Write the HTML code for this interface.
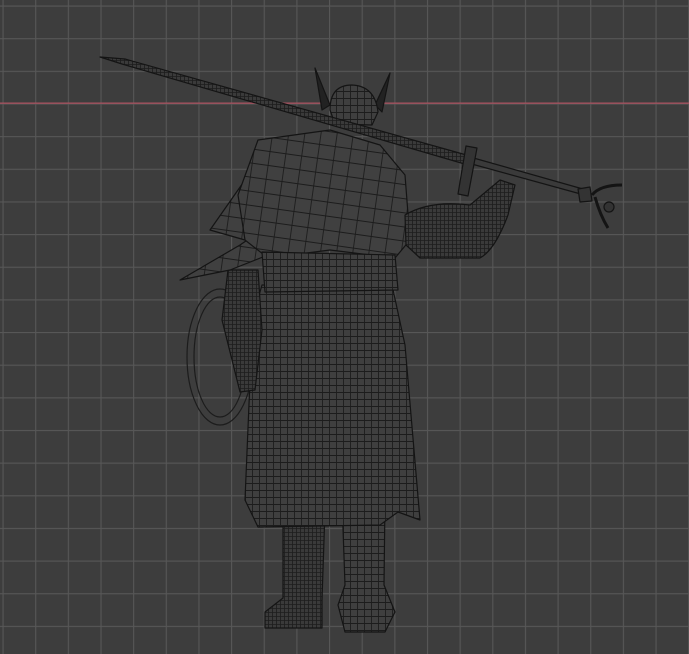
<!DOCTYPE html>
<html><head><meta charset="utf-8"><style>
html,body{margin:0;padding:0;background:#3d3d3d;width:689px;height:654px;overflow:hidden}
svg{display:block}
</style></head><body>
<svg width="689" height="654" viewBox="0 0 689 654" xmlns="http://www.w3.org/2000/svg">
<defs>
<pattern id="g" x="2.5" y="5.5" width="32.65" height="32.65" patternUnits="userSpaceOnUse">
<path d="M0.5 0V32.65M0 0.5H32.65" stroke="#575757" stroke-width="1.2" fill="none"/>
</pattern>
<pattern id="m" width="7" height="7" patternUnits="userSpaceOnUse">
<rect width="7" height="7" fill="#3f3f3f"/>
<path d="M0.5 0V7M0 0.5H7" stroke="#1c1c1c" stroke-width="0.9" fill="none"/>
</pattern>
<pattern id="mf" width="4" height="4" patternUnits="userSpaceOnUse">
<rect width="4" height="4" fill="#3a3a3a"/>
<path d="M0.5 0V4M0 0.5H4" stroke="#1c1c1c" stroke-width="0.8" fill="none"/>
</pattern>
<pattern id="mc" width="16" height="14" patternUnits="userSpaceOnUse" patternTransform="rotate(8)">
<rect width="16" height="14" fill="#404040"/>
<path d="M0.5 0V14M0 0.5H16" stroke="#1c1c1c" stroke-width="0.9" fill="none"/>
</pattern>
</defs>
<rect width="689" height="654" fill="#3d3d3d"/>
<rect width="689" height="654" fill="url(#g)"/>
<rect x="0" y="102.5" width="689" height="1.3" fill="#a8515f"/>
<g stroke="#141414" stroke-width="1.2" stroke-linejoin="round">
<ellipse cx="220" cy="357" rx="33" ry="68" fill="none" stroke="#1c1c1c" stroke-width="1.2"/>
<ellipse cx="220" cy="357" rx="26" ry="60" fill="none" stroke="#1c1c1c" stroke-width="1.2"/>
<path d="M315 68 L330 105 L322 110 Z" fill="#222"/>
<path d="M390 73 L375 105 L382 112 Z" fill="#222"/>
<path d="M330 110 Q330 85 352 85 Q375 86 378 112 L372 125 L335 124 Z" fill="url(#m)"/>
<path d="M283 510 L325 510 L322 600 L322 628 L265 628 L265 612 L283 598 Z" fill="url(#mf)"/>
<path d="M342 500 L385 500 L384 585 L395 612 L385 632 L345 632 L338 605 L345 585 Z" fill="url(#m)"/>
<path d="M262 285 L392 285 L405 345 L420 520 L398 512 L380 525 L258 527 L245 500 L250 380 L252 320 Z" fill="url(#m)"/>
<path d="M228 270 L258 270 L262 330 L255 390 L240 392 L232 360 L222 320 Z" fill="url(#mf)"/>
<path d="M180 280 L240 245 L262 230 L268 255 L230 270 Z" fill="url(#mc)"/>
<path d="M210 230 L245 180 L258 200 L245 240 Z" fill="url(#mc)"/>
<path d="M258 140 L330 130 L380 145 L405 175 L410 240 L395 258 L330 250 L268 258 L245 240 L238 195 Z" fill="url(#mc)"/>
<path d="M262 252 L395 255 L398 290 L265 292 Z" fill="url(#m)"/>
<path d="M405 215 Q430 200 470 205 L500 180 L515 185 L508 215 Q495 250 480 258 L420 258 L406 245 Z" fill="url(#mf)"/>
<path d="M100 57 L125 59 L470 156 L468 165 L122 64 Z" fill="url(#mf)"/>
<path d="M470 157 L590 191 L588 196 L468 163 Z" fill="#3a3a3a"/>
<path d="M466 146 L477 148 L468 196 L458 194 Z" fill="#333"/>
<path d="M578 189 L590 187 L592 201 L580 202 Z" fill="#333"/>
<path d="M592 195 Q600 185 622 185 M595 197 Q600 215 608 228" fill="none" stroke-width="3"/>
<circle cx="609" cy="207" r="5" fill="#333"/>
</g>
</svg>
</body></html>
